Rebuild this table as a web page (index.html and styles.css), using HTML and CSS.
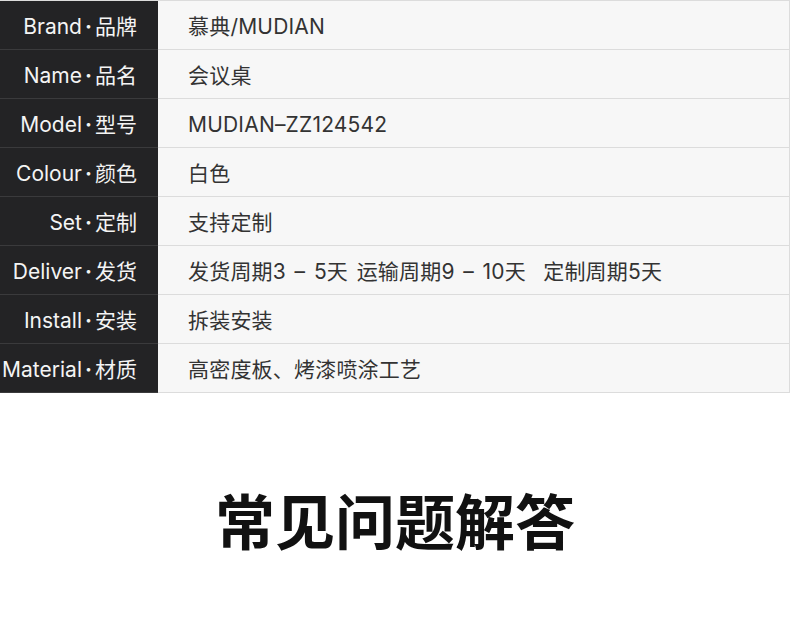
FILE: index.html
```html
<!DOCTYPE html>
<html lang="zh">
<head>
<meta charset="utf-8">
<link rel="stylesheet" href="styles.css">
</head>
<body>
<div class="spec">
  <div class="row"><div class="label">Brand<span class="dot">·</span>品牌</div><div class="value">慕典/MUDIAN</div></div>
  <div class="row"><div class="label">Name<span class="dot">·</span>品名</div><div class="value">会议桌</div></div>
  <div class="row"><div class="label">Model<span class="dot">·</span>型号</div><div class="value">MUDIAN–ZZ124542</div></div>
  <div class="row"><div class="label">Colour<span class="dot">·</span>颜色</div><div class="value">白色</div></div>
  <div class="row"><div class="label">Set<span class="dot">·</span>定制</div><div class="value">支持定制</div></div>
  <div class="row"><div class="label">Deliver<span class="dot">·</span>发货</div><div class="value">发货周期3 – 5天 运输周期9 – 10天&nbsp;&nbsp;定制周期5天</div></div>
  <div class="row"><div class="label">Install<span class="dot">·</span>安装</div><div class="value">拆装安装</div></div>
  <div class="row"><div class="label">Material<span class="dot">·</span>材质</div><div class="value">高密度板、烤漆喷涂工艺</div></div>
</div>
<h1 class="title">常见问题解答</h1>
</body>
</html>
```
FILE: styles.css
```css
html, body {
  margin: 0;
  padding: 0;
  background: #ffffff;
}
body {
  width: 790px;
  font-family: Inter, "Noto Sans CJK SC", sans-serif;
}
.spec {
  width: 789px;
  border-top: 1px solid #dcdcdc;
  border-right: 1px solid #dcdcdc;
}
.row {
  display: flex;
  height: 48px;
  border-bottom: 1px solid #dcdcdc;
}
.label {
  width: 158px;
  flex: none;
  background: #232325;
  color: #f4f4f4;
  font-size: 21px;
  line-height: 44px;
  padding-top: 4px;
  text-align: right;
  padding-right: 21px;
  box-sizing: border-box;
  white-space: nowrap;
  border-bottom: 1px solid #3a3a3c;
  margin-bottom: -1px;
  height: 49px;
}
.dot {
  font-weight: 700;
  margin: 0 3px;
}
.value {
  flex: 1;
  background: #f7f7f7;
  color: #333333;
  font-size: 21px;
  line-height: 44px;
  padding-top: 4px;
  padding-left: 30px;
  white-space: nowrap;
  word-spacing: 2.5px;
  letter-spacing: 0.2px;
}
.title {
  margin: 90px 0 0;
  text-align: center;
  font-family: "Noto Sans CJK SC", sans-serif;
  font-size: 60px;
  line-height: 72px;
  font-weight: 700;
  color: #111111;
}
```
